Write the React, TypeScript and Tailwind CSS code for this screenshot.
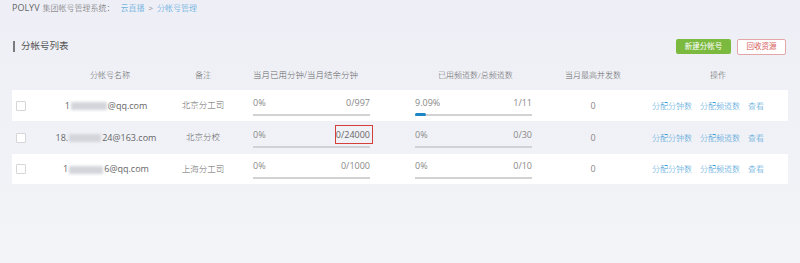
import React from "react";

const font = { fontFamily: '"Open Sans", "Noto Sans CJK SC", sans-serif' };

function Blur({ w }: { w: number }) {
  return (
    <span
      className="inline-block h-[8px] bg-[#d3d5da] blur-[1.5px] align-middle mx-[1px]"
      style={{ width: w }}
    />
  );
}

function Progress({
  pct,
  val,
  fill,
  boxed,
}: {
  pct: string;
  val: string;
  fill?: number;
  boxed?: boolean;
}) {
  return (
    <div className="w-[117px] flex flex-col">
      <div className="flex justify-between items-center h-[14px] text-[9px] text-[#888]">
        <span>{pct}</span>
        {boxed ? (
          <span className="border border-[#d43f3a] pl-[0px] pr-[2px] leading-[17px] -mr-[3px] text-[#666]">
            {val}
          </span>
        ) : (
          <span>{val}</span>
        )}
      </div>
      <div className="relative h-[2px] bg-[#d2d2d5] mt-[4px]">
        {fill ? (
          <div
            className="absolute left-0 -top-[1px] h-[3px] bg-[#1c86c6] rounded-sm"
            style={{ width: fill }}
          />
        ) : null}
      </div>
    </div>
  );
}

type Row = {
  name: React.ReactNode;
  remark: string;
  min: { pct: string; val: string; boxed?: boolean };
  ch: { pct: string; val: string; fill?: number };
  white: boolean;
  h: string;
};

const rows: Row[] = [
  {
    name: (
      <>
        1<Blur w={36} />@qq.com
      </>
    ),
    remark: "北京分工司",
    min: { pct: "0%", val: "0/997" },
    ch: { pct: "9.09%", val: "1/11", fill: 11 },
    white: true,
    h: "h-[31px]",
  },
  {
    name: (
      <>
        18.<Blur w={32} />24@163.com
      </>
    ),
    remark: "北京分校",
    min: { pct: "0%", val: "0/24000", boxed: true },
    ch: { pct: "0%", val: "0/30" },
    white: false,
    h: "h-[33px]",
  },
  {
    name: (
      <>
        1<Blur w={34} />6@qq.com
      </>
    ),
    remark: "上海分工司",
    min: { pct: "0%", val: "0/1000" },
    ch: { pct: "0%", val: "0/10" },
    white: true,
    h: "h-[30px]",
  },
];

export default function App() {
  return (
    <div
      className="w-[800px] h-[263px] bg-gradient-to-b from-[#eeeff6] to-[#f3f4f7] overflow-hidden"
      style={font}
    >
      <div className="pl-[12px] pt-[2px] h-[14px] text-[8px] leading-[12px] text-[#666] flex items-center whitespace-nowrap">
        <span className="text-[9px]">POLYV</span>
        <span className="font-light ml-[3px]">集团帐号管理系统：</span>
        <span className="font-light text-[#3d9bd6] ml-[6px]">云直播</span>
        <span className="text-[#888] mx-[4px]">&gt;</span>
        <span className="font-light text-[#3d9bd6]">分帐号管理</span>
      </div>

      <div className="flex items-center justify-between pl-[13px] pr-[14px] mt-[24px] h-[17px]">
        <div className="flex items-center">
          <div className="w-[2px] h-[11px] bg-[#7a7a7a]" />
          <span className="ml-[6px] text-[9.5px] text-[#555]">分帐号列表</span>
        </div>
        <div className="flex items-center gap-[6px]">
          <div className="w-[55px] h-[15px] bg-[#7cba3f] rounded-[2px] text-white text-[7.5px] flex items-center justify-center">
            新建分帐号
          </div>
          <div className="w-[49px] h-[16px] bg-white border border-[#e4a7a7] rounded-[2px] text-[#d55a5a] text-[7.5px] flex items-center justify-center">
            回收资源
          </div>
        </div>
      </div>

      <div className="px-[12px] mt-[12px]">
        <div className="flex h-[16px] items-center text-[8px] text-[#666] font-light">
          <div className="w-[28px]" />
          <div className="w-[130px] text-center pl-[10px]">分帐号名称</div>
          <div className="w-[66px] text-center">备注</div>
          <div className="w-[150px] pl-[17px] text-[8.5px]">当月已用分钟/当月结余分钟</div>
          <div className="w-[164px] pl-[52px]">已用频道数/总频道数</div>
          <div className="w-[86px] text-center">当月最高并发数</div>
          <div className="w-[150px] text-center pl-[14px]">操作</div>
        </div>

        <div className="mt-[7px] flex flex-col">
          {rows.map((r, i) => (
            <div
              key={i}
              className={`flex items-center ${r.h} text-[9px] text-[#777] ${
                r.white ? "bg-white" : "bg-transparent"
              }`}
            >
              <div className="w-[28px] pl-[4px] flex items-center">
                <div className="w-[10px] h-[10px] border border-[#d6d6d9] bg-white rounded-[1px]" />
              </div>
              <div className="w-[130px] text-center pl-[2px] whitespace-nowrap text-[#666]">
                {r.name}
              </div>
              <div className="w-[66px] text-center text-[#666] text-[8.5px] font-light">{r.remark}</div>
              <div className="w-[150px] pl-[17px]">
                <Progress {...r.min} />
              </div>
              <div className="w-[164px] pl-[29px]">
                <Progress {...r.ch} />
              </div>
              <div className="w-[86px] text-center text-[#888]">0</div>
              <div className="w-[150px] pl-[16px] flex gap-[8px] text-[8px] text-[#3d9bd6] font-light">
                <span>分配分钟数</span>
                <span>分配频道数</span>
                <span>查看</span>
              </div>
            </div>
          ))}
        </div>
      </div>
    </div>
  );
}
